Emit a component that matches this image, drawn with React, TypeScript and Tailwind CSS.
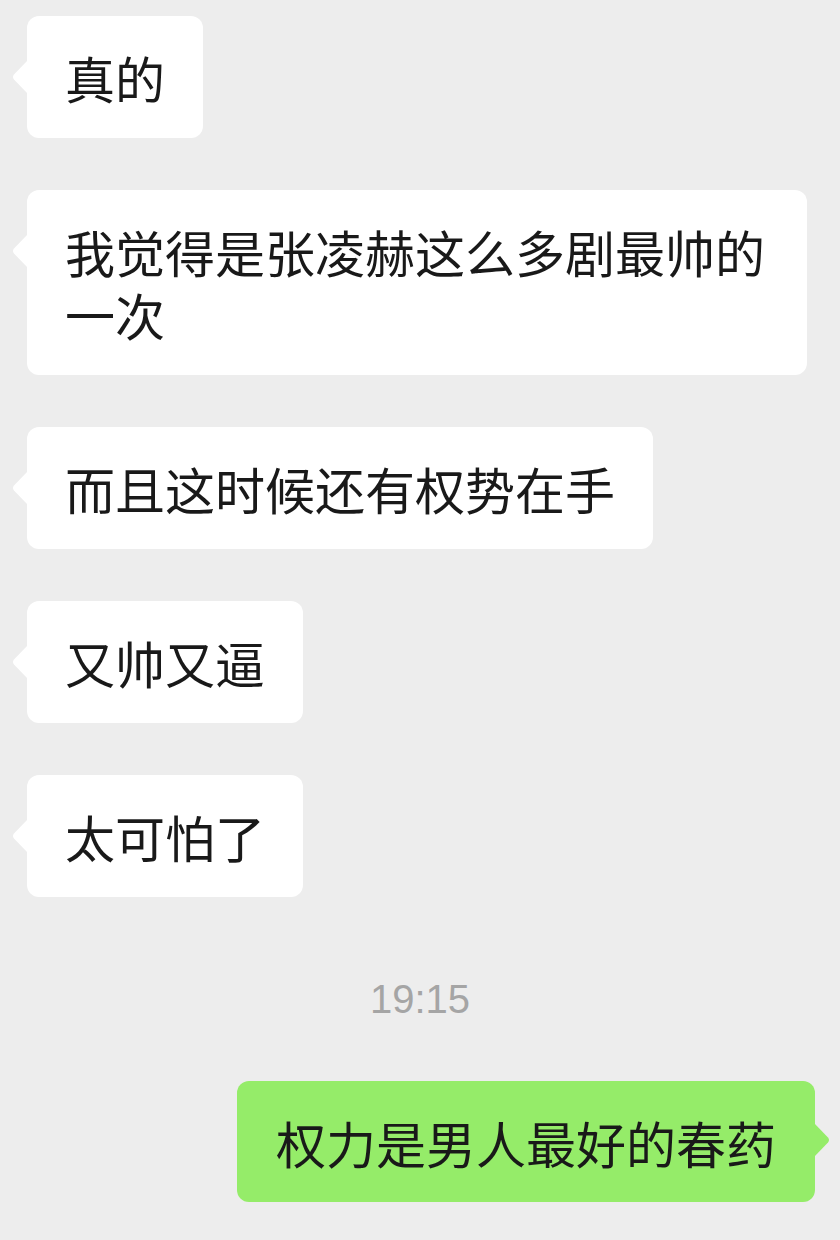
import React from 'react';

type Msg = { text: string; mine?: boolean };

const messages: Msg[] = [
  { text: '真的' },
  { text: '我觉得是张凌赫这么多剧最帅的一次' },
  { text: '而且这时候还有权势在手' },
  { text: '又帅又逼' },
  { text: '太可怕了' },
];

const cjk = { fontFamily: '"Noto Sans CJK SC", "Noto Sans", sans-serif' };

// Incoming bubble (white, tail on the left)
const LeftBubble: React.FC<{ text: string }> = ({ text }) => (
  <div className="relative self-start max-w-[780px] bg-white rounded-[12px] px-[38px] pt-[30px] pb-[29px]">
    <svg
      className="absolute left-[-16px] top-[44px]"
      width="17"
      height="34"
      viewBox="0 0 17 34"
    >
      <path d="M17 0 L17 34 L3 19.5 Q1 17 3 14.5 Z" fill="#ffffff" />
    </svg>
    <p className="text-[50px] leading-[63px] text-[#191919]" style={cjk}>
      {text}
    </p>
  </div>
);

// Outgoing bubble (green, tail on the right)
const RightBubble: React.FC<{ text: string }> = ({ text }) => (
  <div className="relative self-end mr-[25px] max-w-[780px] bg-[#95ec69] rounded-[12px] px-[39px] pt-[30px] pb-[28px]">
    <svg
      className="absolute right-[-16px] top-[42px]"
      width="17"
      height="34"
      viewBox="0 0 17 34"
    >
      <path d="M0 0 L0 34 L14 19.5 Q16 17 14 14.5 Z" fill="#95ec69" />
    </svg>
    <p className="text-[50px] leading-[63px] text-[#191919]" style={cjk}>
      {text}
    </p>
  </div>
);

const App: React.FC = () => {
  return (
    <div className="w-[840px] h-[1240px] bg-[#ededed] overflow-hidden">
      <div className="flex flex-col pt-[16px] pl-[27px] gap-[52px]">
        {messages.map((m, i) => (
          <LeftBubble key={i} text={m.text} />
        ))}
      </div>

      {/* Timestamp */}
      <div
        className="mt-[78px] text-center text-[40px] leading-[48px] text-[#a5a5a5]"
        style={{ fontFamily: '"Liberation Sans", Arial, sans-serif' }}
      >
        19:15
      </div>

      <div className="flex flex-col mt-[58px]">
        <RightBubble text="权力是男人最好的春药" />
      </div>
    </div>
  );
};

export default App;
